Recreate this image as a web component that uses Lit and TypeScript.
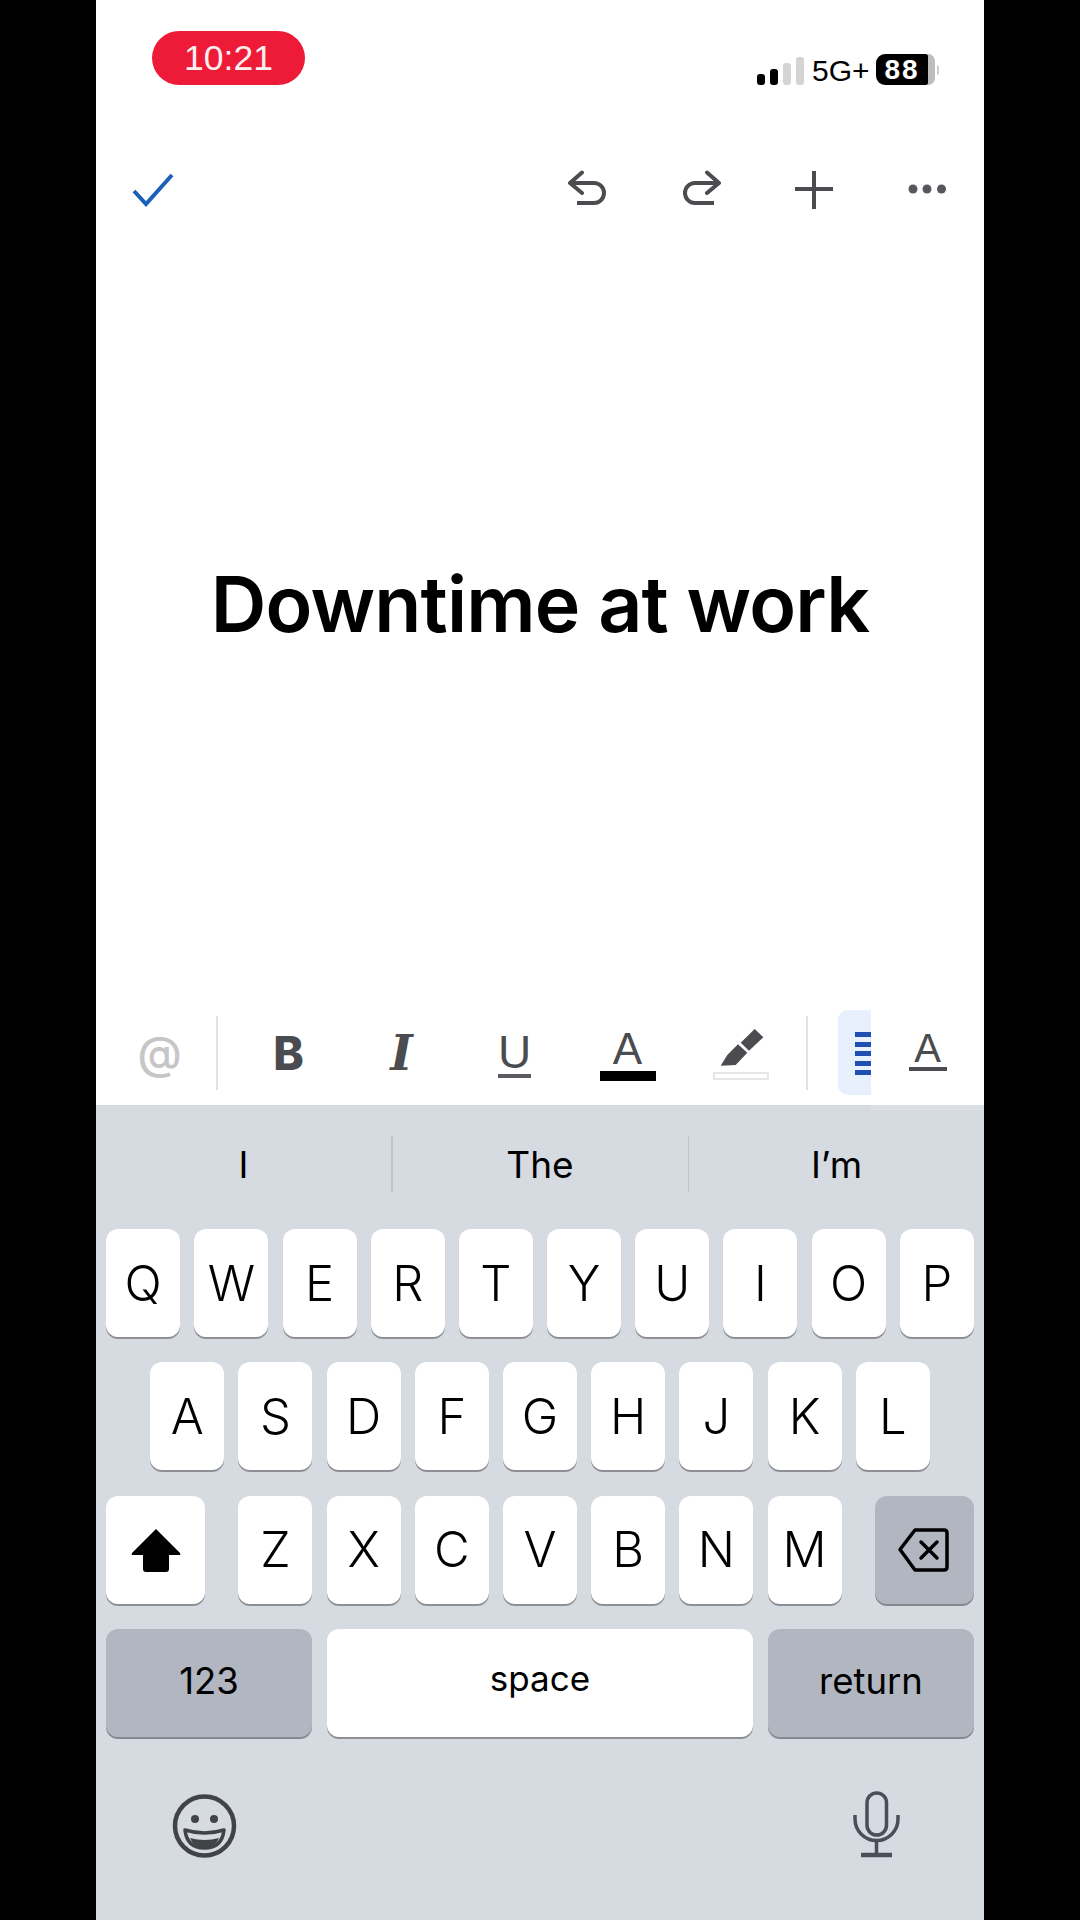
import { LitElement, html, css } from "lit";
import { customElement } from "lit/decorators.js";

const ROW1 = "QWERTYUIOP".split("");
const ROW2 = "ASDFGHJKL".split("");
const ROW3 = "ZXCVBNM".split("");

@customElement("app-root")
export class AppRoot extends LitElement {
  static styles = css`
    :host { display: block; width: 1080px; height: 1920px; background: #000; font-family: Inter, "Liberation Sans", sans-serif; }
    .phone { width: 888px; height: 1920px; margin: 0 auto; background: #fff; display: flex; flex-direction: column; }
    svg { display: block; flex: none; }

    .status { height: 130px; display: flex; align-items: flex-start; padding: 31px 45px 0 56px; box-sizing: border-box; }
    .pill { width: 153px; height: 54px; border-radius: 27px; background: #ee1b38; color: #fbeff0; font: 400 35.5px/54px "Liberation Sans", sans-serif; text-align: center; }
    .right { margin-left: auto; margin-top: 23px; height: 31px; display: flex; align-items: center; }
    .signal { display: flex; align-items: flex-end; gap: 5px; height: 28px; margin-top: 2px; }
    .sb { width: 8px; border-radius: 3px; background: #000; }
    .sb.off { background: #d4d4d4; }
    .s1 { height: 11px; } .s2 { height: 16px; } .s3 { height: 22px; } .s4 { height: 28px; }
    .net { font: 400 30px/31px "Liberation Sans", sans-serif; color: #000; margin: 2px 0 0 8px; width: 64px; }
    .batt { width: 52px; height: 31px; border-radius: 9px 2px 2px 9px; background: #000; color: #fff; font: 700 28px/31px "Liberation Sans", sans-serif; text-align: center; letter-spacing: 2px; }
    .batt-end { width: 7px; height: 31px; background: #bdbdbd; border-radius: 0 8px 8px 0; }
    .nub { width: 2px; height: 10px; background: #cfcfcf; margin-left: 2px; border-radius: 0 2px 2px 0; }

    .toolbar { height: 120px; display: flex; align-items: center; padding-left: 35px; }
    .tools { margin-left: auto; display: flex; gap: 73px; padding-right: 37px; }

    .doc { flex: 1; display: flex; align-items: center; justify-content: center; padding-bottom: 42px; }
    h1 { margin: 0; font: 600 77px/90px Inter, sans-serif; color: #000; letter-spacing: -0.8px; }

    .fmt { height: 105px; display: flex; position: relative; padding-left: 7px; }
    .slot { width: 113px; display: flex; flex-direction: column; align-items: center; color: #4a4c50; flex: none; }
    .g { height: 44px; line-height: 44px; }
    .at { margin-top: 31px; font: 500 45px/44px Inter, sans-serif; color: #c6c6c6; }
    .b { margin-top: 31px; font: 800 46px/44px Inter, sans-serif; }
    .i { margin-top: 31px; font: italic 700 48px/44px "DejaVu Serif", serif; }
    .u { margin-top: 30px; font: 400 46px/44px "Liberation Sans", sans-serif; }
    .a { margin-top: 27px; font: 400 44px/44px "Liberation Sans", sans-serif; }
    .ubar { width: 33px; height: 4px; background: #5a5c60; }
    .abar { width: 56px; height: 10px; background: #000; }
    .hi { margin-top: 25px; }
    .hbar { width: 56px; height: 8px; border: 2px solid #e6e6e6; box-sizing: border-box; margin-top: -3px; }
    .dv { width: 2px; height: 74px; margin-top: 16px; background: #e2e2e2; flex: none; }
    .dv1 { margin-right: 14px; }
    .dv2 { margin-left: 9px; }
    .align { width: 60px; height: 85px; margin: 10px 0 0 30px; background: #e8f0fe; border-radius: 10px 0 0 10px; padding: 22px 0 0 17px; box-sizing: border-box; display: flex; flex-direction: column; gap: 4.5px; flex: none; }
    .align i { display: block; height: 5px; width: 30px; background: #1f4fb0; }
    .over { position: absolute; top: 0; right: 0; width: 113px; height: 105px; background: #fff; display: flex; flex-direction: column; align-items: center; color: #4a4c50; }
    .over::after { content: ""; position: absolute; top: 105px; left: 0; right: 0; height: 5px; background: #dcdfe4; }
    .a2 { margin-top: 29px; font: 400 40px/38px "Liberation Sans", sans-serif; height: 38px; }
    .a2bar { width: 38px; height: 4px; background: #4a4c50; }

    .kb { height: 815px; background: #d6dae1; display: flex; flex-direction: column; }
    .sugg { height: 124px; display: flex; align-items: center; color: #000; font-size: 37px; }
    .sugg span { flex: 1; text-align: center; line-height: 56px; margin-top: -5px; }
    .sugg b { width: 1.5px; height: 56px; background: #c0c4cb; margin-top: -6px; }
    .rows { display: flex; flex-direction: column; gap: 25.3px; padding: 0 10px; }
    .row { display: flex; justify-content: center; gap: 14.2px; height: 108px; }
    .row.split { justify-content: space-between; }
    .mid { display: flex; gap: 14.2px; }
    .key { width: 74px; height: 108px; background: #fff; border-radius: 12px; box-shadow: 0 2px 0 #8d8f94; display: flex; align-items: center; justify-content: center; font: 300 49px/1 Inter, sans-serif; color: #000; flex: none; }
    .dark { background: #b1b6c0; box-shadow: 0 2px 0 #85888f; }
    .wide { width: 99px; }
    .bot { gap: 15px; }
    .k123 { width: 206px; font-size: 36.5px; font-weight: 400; padding-bottom: 4px; box-sizing: border-box; }
    .space { width: 426px; font-size: 35px; font-weight: 400; padding-bottom: 8px; box-sizing: border-box; }
    .foot { flex: 1; display: flex; justify-content: space-between; padding: 54px 78px 0 74px; }
  `;

  render() {
    return html`
      <div class="phone">
        <div class="status">
          <div class="pill">10:21</div>
          <div class="right">
            <div class="signal">
              <div class="sb s1"></div><div class="sb s2"></div>
              <div class="sb off s3"></div><div class="sb off s4"></div>
            </div>
            <div class="net">5G+</div>
            <div class="batt">88</div><div class="batt-end"></div><div class="nub"></div>
          </div>
        </div>

        <div class="toolbar">
          <svg width="44" height="40" viewBox="0 0 44 40" fill="none" stroke="#1a5fb8" stroke-width="4"><path d="M3 21 L15 34 L41 5"/></svg>
          <div class="tools">
            <svg width="40" height="40" viewBox="0 0 40 40" fill="none" stroke="#4a4c50" stroke-width="4" stroke-linecap="round" stroke-linejoin="round"><path d="M14 2.500 L2 13 L14 23"/><path d="M2 13 H26 a10 10 0 0 1 0 20 H9" stroke-linecap="butt"/></svg>
            <svg width="40" height="40" viewBox="0 0 40 40" fill="none" stroke="#4a4c50" stroke-width="4" stroke-linecap="round" stroke-linejoin="round"><path d="M26 2.500 L38 13 L26 23"/><path d="M38 13 H14 a10 10 0 0 0 0 20 H33" stroke-linecap="butt"/></svg>
            <svg width="40" height="40" viewBox="0 0 40 40" fill="none" stroke="#4a4c50" stroke-width="4"><path d="M20 1 V39 M1 19 H39"/></svg>
            <svg width="40" height="40" viewBox="0 0 40 40" fill="#55575b"><circle cx="6" cy="19" r="4.500"/><circle cx="20" cy="19" r="4.500"/><circle cx="34.500" cy="19" r="4.500"/></svg>
          </div>
        </div>

        <div class="doc"><h1>Downtime at work</h1></div>

        <div class="fmt">
          <div class="slot"><div class="g at">@</div></div>
          <div class="dv dv1"></div>
          <div class="slot"><div class="g b">B</div></div>
          <div class="slot"><div class="g i">I</div></div>
          <div class="slot"><div class="g u">U</div><div class="ubar"></div></div>
          <div class="slot"><div class="g a">A</div><div class="abar"></div></div>
          <div class="slot">
            <svg class="hi" width="60" height="50" viewBox="0 0 60 50" fill="#4a4c50"><path d="M43.700 4 L52.300 12.300 L38 25.700 L29.700 17.700 Z"/><path d="M27 19.300 L36.300 27.700 L24.700 40 L9.700 40.700 L16.300 30 Z"/></svg>
            <div class="hbar"></div>
          </div>
          <div class="dv dv2"></div>
          <div class="align"><i></i><i></i><i></i><i></i><i></i></div>
          <div class="over"><div class="a2">A</div><div class="a2bar"></div></div>
        </div>

        <div class="kb">
          <div class="sugg"><span>I</span><b></b><span>The</span><b></b><span>I’m</span></div>
          <div class="rows">
            <div class="row">${ROW1.map((k) => html`<div class="key">${k}</div>`)}</div>
            <div class="row">${ROW2.map((k) => html`<div class="key">${k}</div>`)}</div>
            <div class="row split">
              <div class="key wide">
                <svg width="56" height="48" viewBox="0 0 56 48" fill="#000"><path d="M28 3 L52 27 Q53 29 51 29 H41 V43 Q41 46 38 46 H18 Q15 46 15 43 V29 H5 Q3 29 4 27 Z"/></svg>
              </div>
              <div class="mid">${ROW3.map((k) => html`<div class="key">${k}</div>`)}</div>
              <div class="key wide dark">
                <svg width="60" height="50" viewBox="0 0 60 50" fill="none" stroke="#000" stroke-width="3.500" stroke-linejoin="round" stroke-linecap="round"><path d="M5 24.500 L20 5 H49 q3 0 3 3 V42 q0 3 -3 3 H20 Z"/><path d="M26 17 L42 33 M42 17 L26 33"/></svg>
              </div>
            </div>
            <div class="row split bot">
              <div class="key k123 dark">123</div>
              <div class="key space">space</div>
              <div class="key k123 dark">return</div>
            </div>
          </div>
          <div class="foot">
            <svg width="70" height="70" viewBox="0 0 70 70" fill="none"><circle cx="34.500" cy="35" r="29.500" stroke="#414347" stroke-width="4.500"/><circle cx="25" cy="28" r="4" fill="#414347"/><circle cx="44" cy="28" r="4" fill="#414347"/><path d="M15 39 Q34.500 45 54 39 Q52 57 34.500 57 Q17 57 15 39 Z" stroke="#414347" stroke-width="3.500" stroke-linejoin="round"/><path d="M20 47 Q34.500 51 49 47 Q46 56 34.500 56 Q23 56 20 47 Z" fill="#414347"/></svg>
            <svg width="60" height="70" viewBox="0 0 60 70" fill="none" stroke="#4a4e57" stroke-width="3.500"><rect x="21" y="2" width="19.500" height="42" rx="9.750"/><path d="M9 24 V28 a21.500 21.500 0 0 0 43 0 V24"/><path d="M30.500 50 V62"/><path d="M15 64 H46" stroke-width="4.500"/></svg>
          </div>
        </div>
      </div>
    `;
  }
}
